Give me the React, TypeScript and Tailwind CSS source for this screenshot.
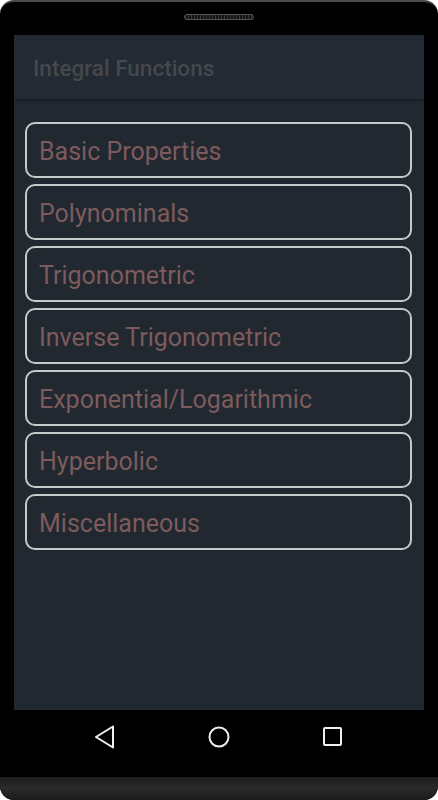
const topics = [
  'Basic Properties',
  'Polynominals',
  'Trigonometric',
  'Inverse Trigonometric',
  'Exponential/Logarithmic',
  'Hyperbolic',
  'Miscellaneous',
]

export default function App() {
  return (
    <div className="w-[438px] h-[800px] bg-white font-['Roboto','Liberation_Sans',sans-serif]">
      <div className="relative w-full h-full rounded-[14px] bg-black border-t-2 border-[#4a4a4a] flex flex-col overflow-hidden">
        {/* 听筒 */}
        <div className="h-[33px] flex items-start justify-center pt-[12px]">
          <div className="w-[70px] h-[6px] rounded-full border border-[#555] bg-[repeating-linear-gradient(90deg,#3a3a3a_0px,#3a3a3a_1px,#111_1px,#111_3px)]" />
        </div>

        {/* 屏幕 */}
        <div className="mx-[14px] h-[675px] bg-[#212830] flex flex-col">
          <div className="h-[64px] bg-[#232a33] flex items-center pt-[3px] px-[19px] shadow-[0_2px_3px_rgba(0,0,0,0.25)]">
            <span className="text-[22.5px] font-medium text-[#45484c]">Integral Functions</span>
          </div>
          <div className="flex flex-col gap-[6px] pt-[23px] pl-[11px] pr-[12px]">
            {topics.map(t => (
              <div
                key={t}
                className="h-[56px] rounded-[10px] border-2 border-[#c8c9cb] flex items-center pt-[4px] px-[12px]"
              >
                <span className="text-[25px] text-[#7d5b5d]">{t}</span>
              </div>
            ))}
          </div>
        </div>

        {/* 导航栏 */}
        <div className="h-[67px] flex items-start justify-center gap-[74px] pt-[7px]">
          <svg width="40" height="40" viewBox="0 0 40 40" fill="none" stroke="#f0f0f0" strokeWidth="2" strokeLinejoin="round">
            <path d="M28 9.5 L11 20 L28 30.5 Z" />
          </svg>
          <svg width="40" height="40" viewBox="0 0 40 40" fill="none" stroke="#f0f0f0" strokeWidth="2">
            <circle cx="20" cy="20" r="9.5" />
          </svg>
          <svg width="40" height="40" viewBox="0 0 40 40" fill="none" stroke="#f0f0f0" strokeWidth="2">
            <rect x="11" y="11" width="17" height="17" rx="1" />
          </svg>
        </div>

        {/* 底部 */}
        <div className="flex-1 bg-gradient-to-b from-[#1c1c1c] via-[#2a2a2a] to-[#1a1a1a]" />
      </div>
    </div>
  )
}
